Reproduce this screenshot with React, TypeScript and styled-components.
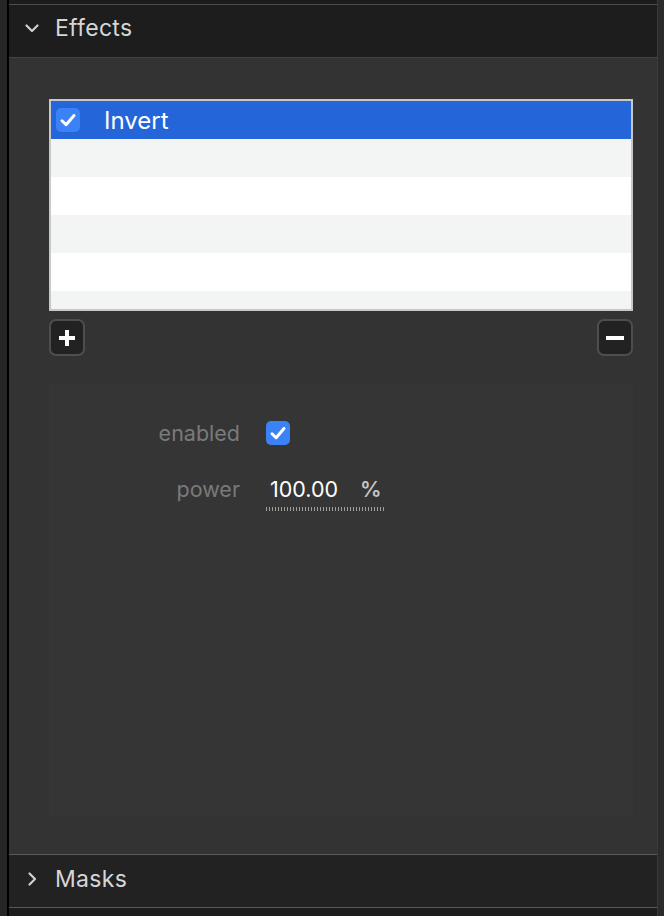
import React, { useState } from 'react';
import styled, { createGlobalStyle } from 'styled-components';

const GlobalStyle = createGlobalStyle`
  html, body {
    margin: 0;
    padding: 0;
    background: #262626;
    font-family: 'Inter', 'Liberation Sans', sans-serif;
  }
  * { box-sizing: border-box; }
`;

const Shell = styled.div`
  display: flex;
  width: 664px;
  height: 916px;
  background: #262626;
  overflow: hidden;
`;

const LeftGutter = styled.div`
  width: 9px;
  background: #262626;
  border-right: 2px solid #000;
  flex: none;
`;

const Inspector = styled.div`
  flex: 1;
  display: flex;
  flex-direction: column;
  min-width: 0;
`;

const TopStrip = styled.div`
  height: 5px;
  background: #1c1c1c;
  border-bottom: 1px solid #4c4c4c;
  flex: none;
`;

const SectionHeader = styled.div<{ $dim?: boolean }>`
  height: ${(p) => (p.$dim ? '54px' : '53px')};
  flex: none;
  display: flex;
  align-items: center;
  gap: 15px;
  padding-left: 15px;
  padding-bottom: ${(p) => (p.$dim ? '4px' : '6px')};
  background: ${(p) => (p.$dim ? '#222222' : '#1d1d1d')};
  border-top: ${(p) => (p.$dim ? '1px solid #5a5a5a' : 'none')};
  border-bottom: 1px solid ${(p) => (p.$dim ? '#5a5a5a' : '#444444')};
  color: #d6d6d6;
  font-size: 23px;
  letter-spacing: 0.3px;
`;

const Chevron = styled.svg`
  width: 16px;
  height: 16px;
  flex: none;
`;

const Body = styled.div`
  flex: 1;
  background: #333333;
  padding: 41px 24px 38px 40px;
  display: flex;
  flex-direction: column;
`;

const List = styled.div`
  height: 212px;
  border: 2px solid #c8c8c8;
  background: #ffffff;
  overflow: hidden;
`;

const Row = styled.div<{ $selected?: boolean; $alt?: boolean }>`
  height: 38px;
  display: flex;
  align-items: center;
  gap: 24px;
  padding-left: 5px;
  background: ${(p) => (p.$selected ? '#2466d9' : p.$alt ? '#f3f4f4' : '#ffffff')};
  color: #ffffff;
  font-size: 24px;
`;

const Check = styled.span<{ $size: number }>`
  width: ${(p) => p.$size}px;
  height: ${(p) => p.$size}px;
  border-radius: 5px;
  background: #3b82f6;
  display: inline-flex;
  align-items: center;
  justify-content: center;
  flex: none;
`;

const ButtonBar = styled.div`
  display: flex;
  justify-content: space-between;
  margin-top: 8px;
`;

const SquareButton = styled.button`
  width: 36px;
  height: 37px;
  border-radius: 7px;
  border: 2px solid #4e4e4e;
  background: #222222;
  display: flex;
  align-items: center;
  justify-content: center;
  padding: 0;
  cursor: pointer;
`;

const Params = styled.div`
  flex: 1;
  margin-top: 28px;
  background: #353535;
  padding-top: 36px;
  display: grid;
  grid-template-columns: 191px auto;
  grid-auto-rows: min-content;
  column-gap: 26px;
  row-gap: 30px;
  align-items: start;
`;

const Label = styled.div`
  text-align: right;
  color: #7a7a7a;
  font-size: 21.5px;
  line-height: 26px;
`;

const Field = styled.div`
  display: flex;
  align-items: center;
  min-height: 26px;
`;

const NumberBox = styled.div`
  display: flex;
  align-items: baseline;
  gap: 22px;
  padding: 0 3px 9px 4px;
  color: #ffffff;
  font-size: 21.5px;
  line-height: 26px;
  background-image: repeating-linear-gradient(90deg, #a0a0a0 0 1px, transparent 1px 3px);
  background-size: 100% 4px;
  background-position: bottom left;
  background-repeat: no-repeat;
`;

const Unit = styled.span`
  color: #c4c4c4;
  font-weight: 600;
`;

const BottomStrip = styled.div`
  height: 8px;
  background: #1c1c1c;
  flex: none;
`;

const RightGutter = styled.div`
  width: 7px;
  flex: none;
  background: #2b2b2b;
  border-left: 1px solid #3a3a3a;
`;

const Tick = () => (
  <svg width="20" height="20" viewBox="0 0 16 16">
    <path d="M3.2 8.6 L6.5 11.8 L12.8 4.4" fill="none" stroke="#fff" strokeWidth="2.4" strokeLinecap="round" strokeLinejoin="round" />
  </svg>
);

const App: React.FC = () => {
  const [rows] = useState(['Invert', '', '', '', '', '']);

  return (
    <>
      <GlobalStyle />
      <Shell>
        <LeftGutter />
        <Inspector>
          <TopStrip />
          <SectionHeader>
            <Chevron viewBox="0 0 16 16">
              <path d="M2.5 5.5 L8 11 L13.5 5.5" fill="none" stroke="#d0d0d0" strokeWidth="2.2" strokeLinecap="round" strokeLinejoin="round" />
            </Chevron>
            Effects
          </SectionHeader>
          <Body>
            <List>
              {rows.map((name, i) => (
                <Row key={i} $selected={i === 0} $alt={i % 2 === 1}>
                  {i === 0 && (
                    <Check $size={24}>
                      <Tick />
                    </Check>
                  )}
                  {name}
                </Row>
              ))}
            </List>
            <ButtonBar>
              <SquareButton aria-label="add">
                <svg width="20" height="20" viewBox="0 0 20 20">
                  <path d="M10 2 V18 M2 10 H18" stroke="#fff" strokeWidth="4" />
                </svg>
              </SquareButton>
              <SquareButton aria-label="remove">
                <svg width="20" height="20" viewBox="0 0 20 20">
                  <path d="M1 10 H19" stroke="#fff" strokeWidth="4" />
                </svg>
              </SquareButton>
            </ButtonBar>
            <Params>
              <Label>enabled</Label>
              <Field>
                <Check $size={24}>
                  <Tick />
                </Check>
              </Field>
              <Label>power</Label>
              <Field>
                <NumberBox>
                  <span>100.00</span>
                  <Unit>%</Unit>
                </NumberBox>
              </Field>
            </Params>
          </Body>
          <SectionHeader $dim>
            <Chevron viewBox="0 0 16 16">
              <path d="M5.5 2.5 L11 8 L5.5 13.5" fill="none" stroke="#d0d0d0" strokeWidth="2.2" strokeLinecap="round" strokeLinejoin="round" />
            </Chevron>
            Masks
          </SectionHeader>
          <BottomStrip />
        </Inspector>
        <RightGutter />
      </Shell>
    </>
  );
};

export default App;
